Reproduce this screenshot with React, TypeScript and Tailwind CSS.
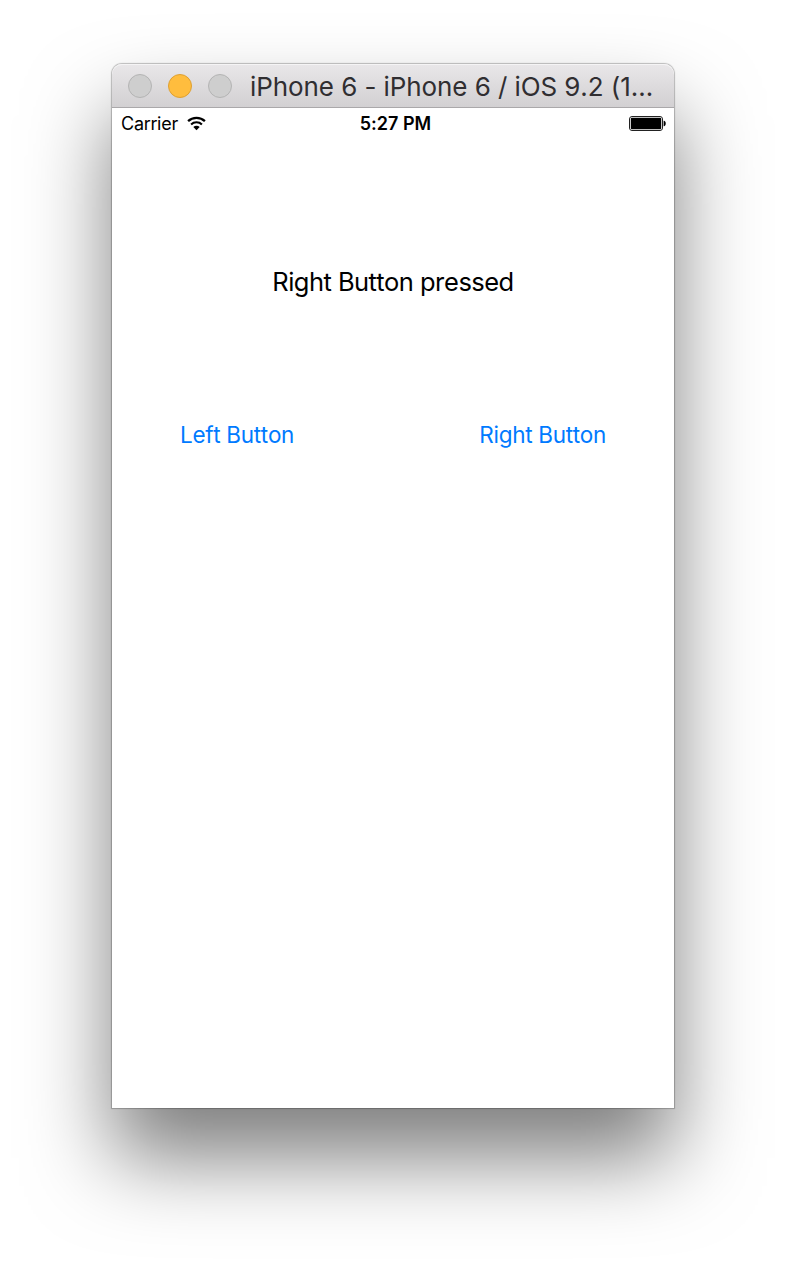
function WifiIcon() {
  return (
    <svg className="ml-2 h-[15px] w-[19px]" viewBox="0 0 19 15" fill="none" stroke="#000">
      <path d="M1.1 5.1C5.7 0.7 13.3 0.7 17.9 5.1" strokeWidth="2.3" />
      <path d="M4.1 8.4C7 5.6 12 5.6 14.9 8.4" strokeWidth="2.1" />
      <path d="M6.3 11.1C8.1 9.3 10.9 9.3 12.7 11.1L9.5 14.3Z" fill="#000" stroke="none" />
    </svg>
  );
}

function BatteryIcon() {
  return (
    <svg className="h-[15px] w-[37px]" viewBox="0 0 37 15">
      <rect x="0.5" y="0.5" width="33" height="14" rx="2.5" fill="#fff" stroke="#222" />
      <rect x="1.8" y="1.8" width="30.4" height="11.4" rx="1.2" fill="#000" />
      <path d="M34.6 4.8H35.2C37.2 5.4 37.2 9.6 35.2 10.2H34.6Z" fill="#000" />
    </svg>
  );
}

export default function App() {
  return (
    <div className="flex h-[1268px] w-[786px] items-start justify-center overflow-hidden bg-white pt-[64px] font-['Inter','Liberation_Sans',sans-serif] [font-feature-settings:'calt'_0,'liga'_0] [font-kerning:none]">
      <main className="h-[1044px] w-[562px] rounded-t-[10px] bg-white shadow-[0_0_1px_1px_rgba(0,0,0,0.24),0_50px_84px_rgba(0,0,0,0.51)]">
        <header className="flex h-[44px] items-center rounded-t-[10px] border-b border-[#aaa8aa] bg-linear-to-b from-[#e9e7e9] to-[#d2d0d2] pl-4 shadow-[inset_0_1px_0_#f5f4f5]">
          <div className="flex shrink-0 gap-4 pt-px">
            <span className="size-6 rounded-full border border-[#b4b4b4] bg-[#cecece]" />
            <span className="size-6 rounded-full border border-[#dea032] bg-[#ffbd3e]" />
            <span className="size-6 rounded-full border border-[#b4b4b4] bg-[#cecece]" />
          </div>
          <h1 className="ml-[18px] whitespace-nowrap pt-[3px] text-[26px] leading-[40px] tracking-[-0.08px] text-[#302e31]">iPhone 6 - iPhone 6 / iOS 9.2 (1…</h1>
        </header>
        <div className="grid h-[31px] grid-cols-3 items-center pr-2 pl-[9px] text-[18px] leading-[31px] text-black">
          <div className="flex items-center">
            <span className="w-[58px] whitespace-nowrap tracking-[-0.2px]">Carrier</span>
            <WifiIcon />
          </div>
          <span className="pl-[4px] text-center font-semibold">5:27 PM</span>
          <div className="flex justify-end"><BatteryIcon /></div>
        </div>
        <p className="mt-[123px] text-center text-[25.5px] leading-[40px] tracking-[-0.55px] text-black">Right Button pressed</p>
        <div className="mt-[118px] flex justify-between pr-[68px] pl-[68px] text-[22.5px] leading-[30px] text-[#007aff]">
          <button className="tracking-[-0.3px]">Left Button</button>
          <button className="tracking-[-0.3px]">Right Button</button>
        </div>
      </main>
    </div>
  );
}
